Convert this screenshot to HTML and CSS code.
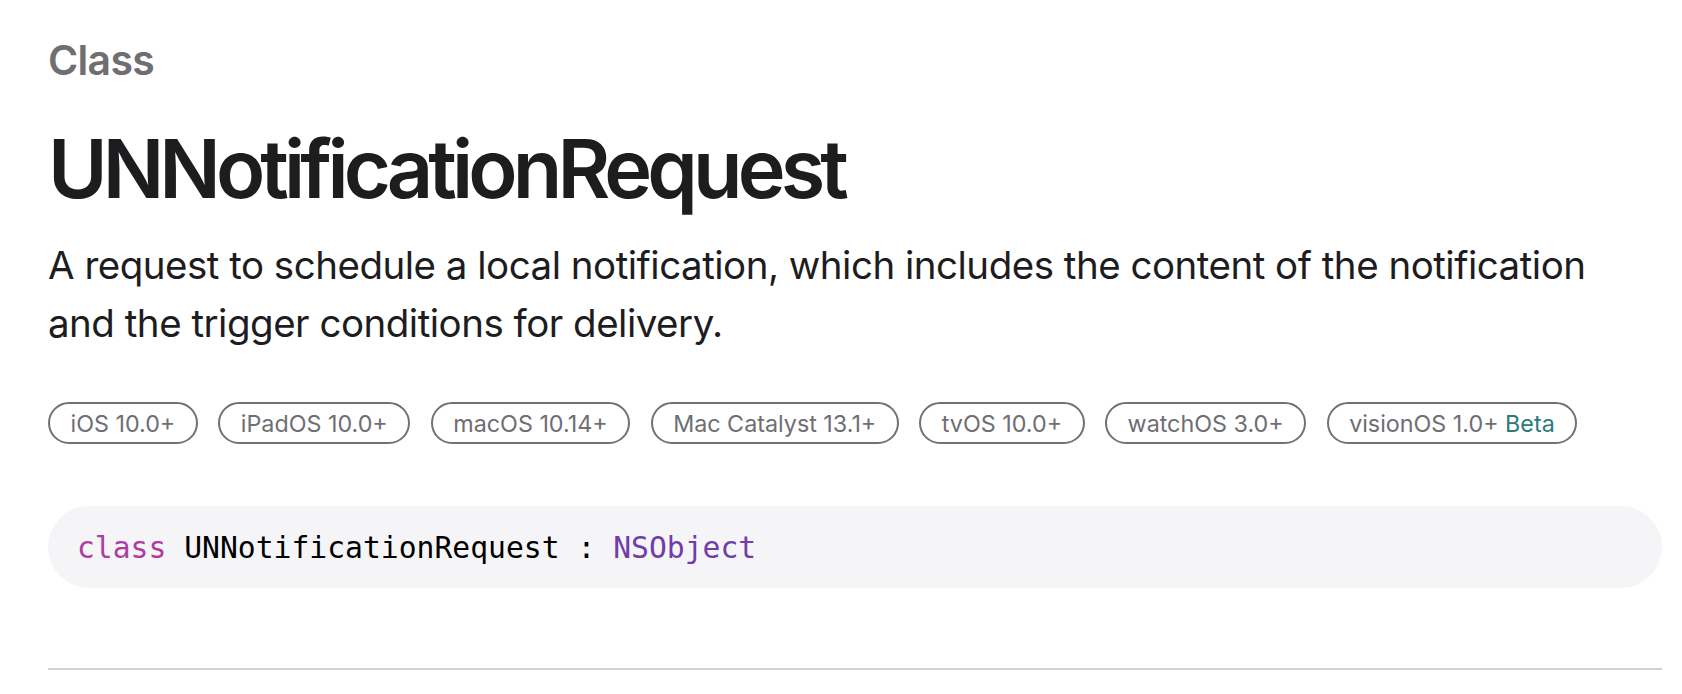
FILE: index.html
```html
<!DOCTYPE html>
<html lang="en">
<head>
<meta charset="utf-8">
<title>UNNotificationRequest</title>
<link rel="stylesheet" href="styles.css">
</head>
<body>
<main class="page">
  <div class="eyebrow">Class</div>
  <h1 class="title">UNNotificationRequest</h1>
  <p class="abstract">A request to schedule a local notification, which includes the content of the notification and the trigger conditions for delivery.</p>
  <ul class="platforms">
    <li class="badge">iOS 10.0+</li>
    <li class="badge">iPadOS 10.0+</li>
    <li class="badge">macOS 10.14+</li>
    <li class="badge">Mac Catalyst 13.1+</li>
    <li class="badge">tvOS 10.0+</li>
    <li class="badge">watchOS 3.0+</li>
    <li class="badge">visionOS 1.0+ <span class="beta">Beta</span></li>
  </ul>
  <div class="declaration"><code><span class="kw">class</span> UNNotificationRequest : <span class="type">NSObject</span></code></div>
  <hr class="divider">
</main>
</body>
</html>
```

FILE: styles.css
```css
html, body {
  margin: 0;
  padding: 0;
  background: #ffffff;
}

body {
  font-family: Inter, "Noto Sans", "Liberation Sans", sans-serif;
  color: #1d1d1f;
}

.page {
  padding: 36px 20px 0 48px;
}

.eyebrow {
  font-size: 41px;
  line-height: 48px;
  font-weight: 600;
  color: #6e6e73;
  letter-spacing: -0.7px;
}

.title {
  margin: 37px 0 0;
  font-size: 81px;
  line-height: 96px;
  font-weight: 600;
  letter-spacing: -4.9px;
  color: #1d1d1f;
}

.abstract {
  margin: 19px 0 0;
  max-width: 1570px;
  font-size: 38.5px;
  line-height: 58px;
  font-weight: 400;
  letter-spacing: -0.5px;
}

.platforms {
  list-style: none;
  margin: 50px 0 0;
  padding: 0;
  display: flex;
  flex-wrap: wrap;
  gap: 20.5px;
}

.badge {
  box-sizing: border-box;
  height: 42px;
  padding: 0 20.5px;
  border: 2px solid #717176;
  border-radius: 21px;
  display: flex;
  align-items: center;
  font-size: 23.3px;
  color: #6e6e73;
  white-space: pre;
}

.beta {
  color: #2c7a78;
}

.declaration {
  margin-top: 62px;
  height: 82px;
  box-sizing: border-box;
  padding: 0 29px;
  border-radius: 41px;
  background: #f5f5f7;
  display: flex;
  align-items: center;
}

.declaration code {
  font-family: "DejaVu Sans Mono", "Liberation Mono", monospace;
  font-size: 29.7px;
  color: #000000;
}

.kw {
  color: #ad3da4;
}

.type {
  color: #703daa;
}

.divider {
  margin: 80px 0 0;
  border: 0;
  height: 2px;
  background: #d2d2d7;
}
```
